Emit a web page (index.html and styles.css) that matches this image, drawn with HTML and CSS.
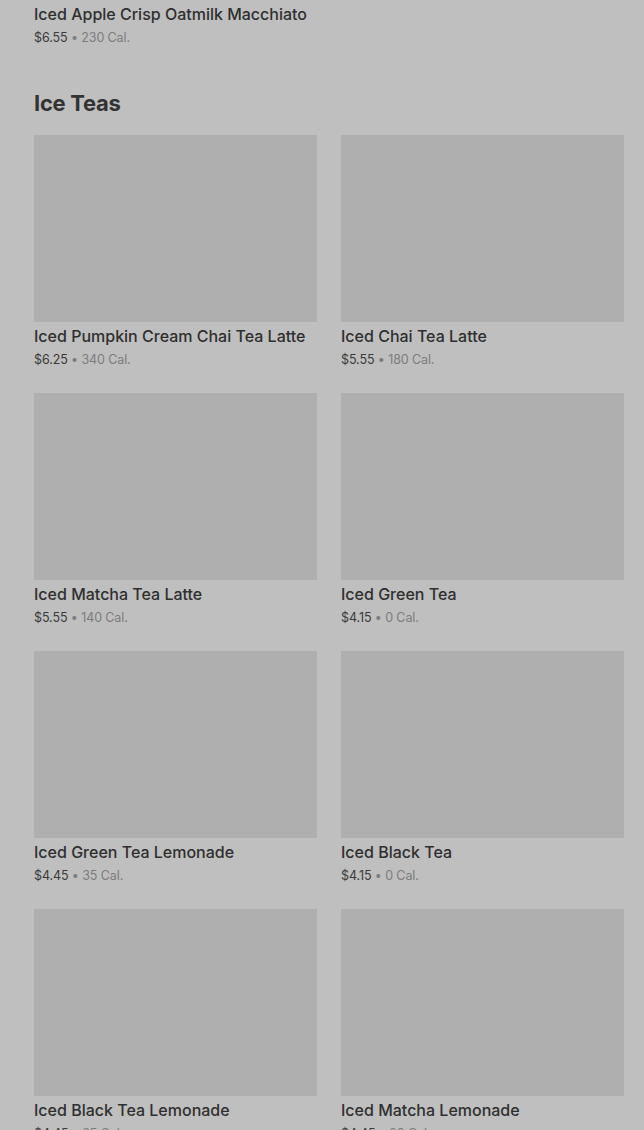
FILE: index.html
```html
<!DOCTYPE html>
<html>
  <head>
    <meta charset="UTF-8">
    <title>Menu - Ice Teas</title>
    <link rel="stylesheet" href="styles.css">
  </head>
  <body>
    <main class="menu">
      <section class="menu-section">
        <div class="item-grid">
          <div class="item">
            <div class="item-image"></div>
            <div class="item-name">Iced Apple Crisp Oatmilk Macchiato</div>
            <div class="item-meta"><span class="price">$6.55</span> • 230 Cal.</div>
          </div>
        </div>
      </section>

      <section class="menu-section">
        <h2 class="section-title">Ice Teas</h2>
        <div class="item-grid">
          <div class="item">
            <div class="item-image"></div>
            <div class="item-name">Iced Pumpkin Cream Chai Tea Latte</div>
            <div class="item-meta"><span class="price">$6.25</span> • 340 Cal.</div>
          </div>
          <div class="item">
            <div class="item-image"></div>
            <div class="item-name">Iced Chai Tea Latte</div>
            <div class="item-meta"><span class="price">$5.55</span> • 180 Cal.</div>
          </div>
          <div class="item">
            <div class="item-image"></div>
            <div class="item-name">Iced Matcha Tea Latte</div>
            <div class="item-meta"><span class="price">$5.55</span> • 140 Cal.</div>
          </div>
          <div class="item">
            <div class="item-image"></div>
            <div class="item-name">Iced Green Tea</div>
            <div class="item-meta"><span class="price">$4.15</span> • 0 Cal.</div>
          </div>
          <div class="item">
            <div class="item-image"></div>
            <div class="item-name">Iced Green Tea Lemonade</div>
            <div class="item-meta"><span class="price">$4.45</span> • 35 Cal.</div>
          </div>
          <div class="item">
            <div class="item-image"></div>
            <div class="item-name">Iced Black Tea</div>
            <div class="item-meta"><span class="price">$4.15</span> • 0 Cal.</div>
          </div>
          <div class="item">
            <div class="item-image"></div>
            <div class="item-name">Iced Black Tea Lemonade</div>
            <div class="item-meta"><span class="price">$4.45</span> • 35 Cal.</div>
          </div>
          <div class="item">
            <div class="item-image"></div>
            <div class="item-name">Iced Matcha Lemonade</div>
            <div class="item-meta"><span class="price">$4.45</span> • 90 Cal.</div>
          </div>
        </div>
      </section>
    </main>
  </body>
</html>
```

FILE: styles.css
```css
html, body {
  margin: 0;
  padding: 0;
  background: #bfbfbf;
  overflow: hidden;
}
body {
  font-family: Inter, "Noto Sans", sans-serif;
  color: #2e2e2e;
}
.menu {
  /* page is scrolled down: the previous row's image sits above the top */
  margin-top: -187px;
  padding: 0 20px 0 34px;
}
.menu-section + .menu-section {
  margin-top: 40px;
}
.section-title {
  margin: 0 0 16px;
  font-size: 22px;
  line-height: 32px;
  font-weight: 700;
  color: #333333;
  letter-spacing: -0.3px;
}
.item-grid {
  display: grid;
  grid-template-columns: 1fr 1fr;
  column-gap: 24px;
  row-gap: 24px;
}
.item-image {
  height: 187px;
  background: #afafaf;
}
.item-name {
  margin-top: 4px;
  font-size: 16px;
  line-height: 20px;
  font-weight: 500;
  color: #2f2f2f;
  white-space: nowrap;
}
.item-meta {
  margin: 4px 0 -1px;
  font-size: 12.5px;
  line-height: 20px;
  letter-spacing: -0.1px;
  color: #7c7c7c;
}
.price {
  color: #3a3a3a;
}
```
